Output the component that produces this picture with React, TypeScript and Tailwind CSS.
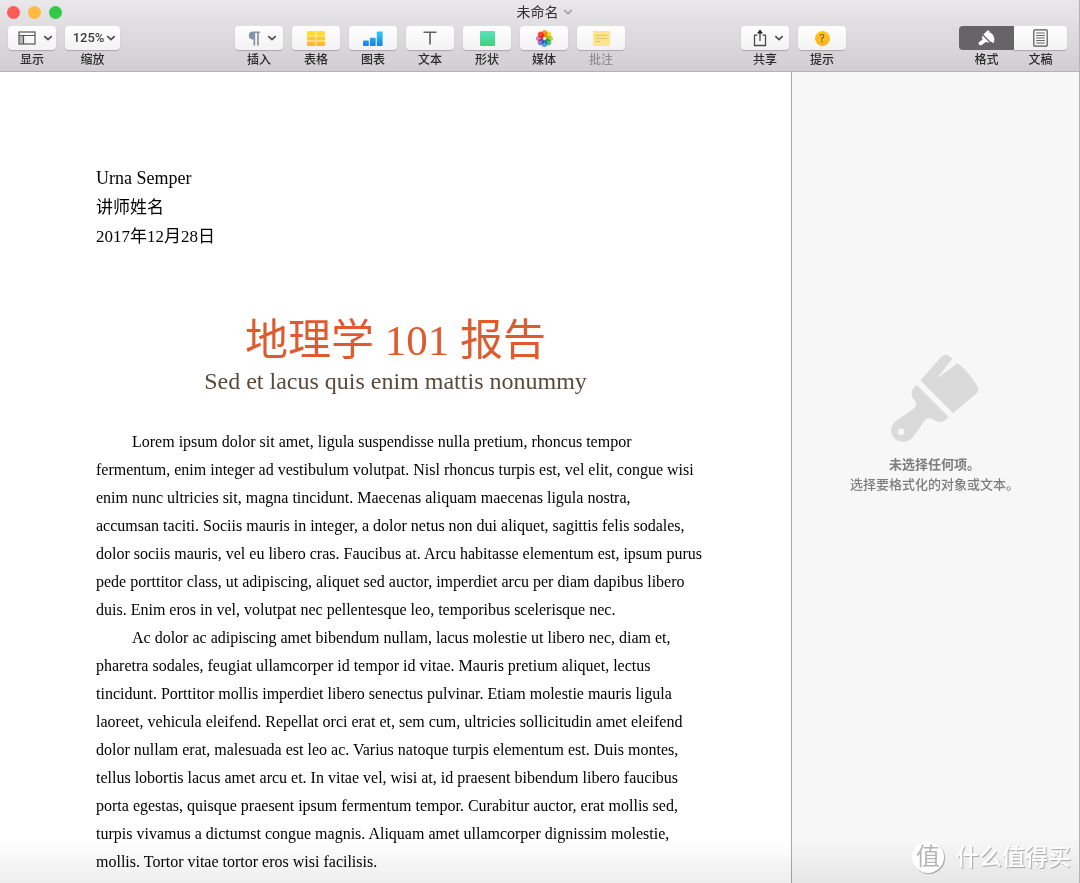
import type { ReactNode } from "react"

const LINES_ONE = [
  "Lorem ipsum dolor sit amet, ligula suspendisse nulla pretium, rhoncus tempor",
  "fermentum, enim integer ad vestibulum volutpat. Nisl rhoncus turpis est, vel elit, congue wisi",
  "enim nunc ultricies sit, magna tincidunt. Maecenas aliquam maecenas ligula nostra,",
  "accumsan taciti. Sociis mauris in integer, a dolor netus non dui aliquet, sagittis felis sodales,",
  "dolor sociis mauris, vel eu libero cras. Faucibus at. Arcu habitasse elementum est, ipsum purus",
  "pede porttitor class, ut adipiscing, aliquet sed auctor, imperdiet arcu per diam dapibus libero",
  "duis. Enim eros in vel, volutpat nec pellentesque leo, temporibus scelerisque nec.",
]

const LINES_TWO = [
  "Ac dolor ac adipiscing amet bibendum nullam, lacus molestie ut libero nec, diam et,",
  "pharetra sodales, feugiat ullamcorper id tempor id vitae. Mauris pretium aliquet, lectus",
  "tincidunt. Porttitor mollis imperdiet libero senectus pulvinar. Etiam molestie mauris ligula",
  "laoreet, vehicula eleifend. Repellat orci erat et, sem cum, ultricies sollicitudin amet eleifend",
  "dolor nullam erat, malesuada est leo ac. Varius natoque turpis elementum est. Duis montes,",
  "tellus lobortis lacus amet arcu et. In vitae vel, wisi at, id praesent bibendum libero faucibus",
  "porta egestas, quisque praesent ipsum fermentum tempor. Curabitur auctor, erat mollis sed,",
  "turpis vivamus a dictumst congue magnis. Aliquam amet ullamcorper dignissim molestie,",
  "mollis. Tortor vitae tortor eros wisi facilisis.",
]

const LINES_THREE = ["Consectetuer arcu ipsum ornare pellentesque vehicula, in vehicula"]

const PETALS = [
  { angle: 0, color: "#fb9a2c" },
  { angle: 45, color: "#f5dc38" },
  { angle: 90, color: "#b4dc50" },
  { angle: 135, color: "#55c08c" },
  { angle: 180, color: "#50aaf0" },
  { angle: 225, color: "#9480d4" },
  { angle: 270, color: "#e67cb4" },
  { angle: 315, color: "#fa5040" },
]

function Chevron({ className = "text-[#4a4a4a]" }: { className?: string }) {
  return (
    <svg viewBox="0 0 10 6" className={`h-[6px] w-[10px] shrink-0 ${className}`} fill="none">
      <path d="M1.3 1.2 5 4.7 8.7 1.2" stroke="currentColor" strokeWidth="1.6" />
    </svg>
  )
}

function ViewIcon() {
  return (
    <svg width="18" height="14" viewBox="0 0 18 14" fill="none" stroke="#555" strokeWidth="1.2">
      <path d="M1.4 4.5h4v8h-4z" fill="#b9b9b9" stroke="none" />
      <rect x="1" y="1" width="16" height="12" />
      <path d="M1 4.5h16M5.5 4.5V13" />
    </svg>
  )
}

function ParagraphIcon() {
  return (
    <svg width="12" height="15" viewBox="0 0 12 15" fill="#8494a8">
      <path d="M4.8 0.5H12V2H10.8V14.5H9.1V2H7.2V14.5H5.5V8.4H4.8A3.95 3.95 0 0 1 4.8 0.5Z" />
    </svg>
  )
}

function TableIcon() {
  return (
    <svg width="18" height="15" viewBox="0 0 18 15">
      <defs>
        <linearGradient id="table" x2="0" y2="1">
          <stop stopColor="#ffe22b" />
          <stop offset="1" stopColor="#ffb32c" />
        </linearGradient>
      </defs>
      <rect width="18" height="15" rx="1" fill="url(#table)" />
      <path d="M0 4.9h18M0 9.9h18M9 0v15" stroke="#fff3c4" strokeWidth="0.9" />
    </svg>
  )
}

function ChartIcon() {
  return (
    <svg width="20" height="15" viewBox="0 0 20 15">
      <defs>
        <linearGradient id="chart" x1="0" x2="0" y1="0" y2="15" gradientUnits="userSpaceOnUse">
          <stop stopColor="#32cdf5" />
          <stop offset="1" stopColor="#1a7df0" />
        </linearGradient>
      </defs>
      <g fill="url(#chart)">
        <rect x="0" y="9.5" width="5.8" height="5.5" rx="0.8" />
        <rect x="6.9" y="6.8" width="5.8" height="8.2" rx="0.8" />
        <rect x="13.8" y="0.4" width="5.8" height="14.6" rx="0.8" />
      </g>
    </svg>
  )
}

function TextIcon() {
  return (
    <svg width="14" height="14" viewBox="0 0 14 14" fill="none" stroke="#606060" strokeWidth="1.6">
      <path d="M0.5 1.2h13M7 1.2V13.5" />
    </svg>
  )
}

function ShapeIcon() {
  return <span className="size-[15px] rounded-[1px] bg-linear-to-b from-[#56e2bd] to-[#3fd27a]" />
}

function MediaIcon() {
  return (
    <svg width="17" height="17" viewBox="-8.5 -8.5 17 17">
      {PETALS.map((p) => (
        <ellipse
          key={p.angle}
          cx="0"
          cy="-4.9"
          rx="2.8"
          ry="3.6"
          fill={p.color}
          transform={`rotate(${p.angle})`}
          className="mix-blend-multiply"
        />
      ))}
    </svg>
  )
}

function CommentIcon() {
  return (
    <svg width="17" height="15" viewBox="0 0 17 15">
      <rect width="17" height="15" rx="0.8" fill="#fde58b" />
      <path d="M2.5 4.3h12M2.5 7.4h12M2.5 10.5h4.5" stroke="#d5bb69" strokeWidth="0.9" />
    </svg>
  )
}

function ShareIcon() {
  return (
    <svg width="14" height="18" viewBox="0 0 14 18" fill="none" stroke="#4a4a4a" strokeWidth="1.3">
      <path d="M4.5 6.2H1.5v10.3h11V6.2h-3M7 12V2" />
      <path d="M4 4.4 7 0.4l3 4z" fill="#1c1c1c" stroke="none" />
    </svg>
  )
}

function TipIcon() {
  return (
    <span className="flex size-[15px] items-center justify-center rounded-full bg-linear-to-b from-[#ffc91f] to-[#fdb022] text-[11px] leading-none text-[#6d4a0c]">
      ?
    </span>
  )
}

function DocumentIcon() {
  return (
    <svg width="15" height="18" viewBox="0 0 15 18" fill="none" stroke="#555">
      <rect x="0.8" y="0.8" width="13.4" height="16.4" rx="1" strokeWidth="1.2" />
      <path d="M3.2 4h8.6M3.2 6.5h8.6M3.2 9h8.6M3.2 11.5h8.6M3.2 14h8.6" strokeWidth="0.9" />
    </svg>
  )
}

function FormatIcon() {
  return (
    <svg width="17" height="16" viewBox="0 0 17 16" fill="#fff">
      <path d="M5.4 4.6 9.4 0.6Q10.2 0 11 0.8L11.6 1.5 10.6 2.8 12 2.2Q16.200 4.8 16.4 9.5 16.3 12.500 15 13.3 14.200 12.7 14 11.600L12.900 12.300 12.400 11.400Z" />
      <path d="M4.7 5.8 11.2 12.2Q10.4 13 9.1 12.200 7.900 11.600 7 12.400L3.800 15C2 16.200 -.2 14.200 .7 12.500 1.200 11.400 2.600 11 4 9.900 5 9 4.500 8.700 4.100 8.100 3.500 7.200 3.900 6.400 4.700 5.800Z" />
    </svg>
  )
}

function BrushIcon() {
  return (
    <svg width="88" height="88" viewBox="0 0 88 88" fill="currentColor">
      <path d="M29.5 26.5 50 3Q53.5-.5 57 1.2L61.5 4.5 46 24.5 66.5 9Q80 20 87 33.500 88 36.500 86 39L62 59Z" />
      <path
        fillRule="evenodd"
        d="M25.5 31 57.5 63C54 67.500 49 69.500 44 66.500 39.500 63.500 36 63 33 67.500L22 83C17 89.500 7.500 89 3 84-2 78.500 0 70.500 5.500 66.500L21.500 55.500C26.500 52 25.500 49 22.500 45 19 40.500 20.500 35 25.500 31ZM10 74.500a3.300 3.300 0 1 0 .01 6.600 3.300 3.300 0 1 0-.01-6.600Z"
      />
    </svg>
  )
}

type ToolProps = {
  label: string
  children: ReactNode
  menu?: boolean
  disabled?: boolean
}

function Tool({ label, children, menu, disabled }: ToolProps) {
  return (
    <button type="button" disabled={disabled} className="flex flex-col items-center gap-0.5">
      <span
        className={`flex h-6 w-12 items-center justify-center rounded bg-linear-to-b from-white to-[#f3f3f3] shadow-[0_1px_1px_rgba(0,0,0,0.22)] ${menu ? "gap-[7px] pl-1.5" : ""}`}
      >
        {children}
        {menu && <Chevron />}
      </span>
      <span
        className={`text-xs leading-4 font-medium ${disabled ? "text-[#8f8e90]" : "text-[#2c2c2c]"}`}
      >
        {label}
      </span>
    </button>
  )
}

function Toolbar() {
  return (
    <header className="flex h-18 shrink-0 flex-col gap-0.5 border-b border-[#b3b1b3] bg-linear-to-b from-[#e9e7e9] to-[#d0ced0]">
      <div className="grid h-6 grid-cols-3 items-center px-[7px]">
        <div className="flex items-center gap-2">
          <button type="button" aria-label="关闭" className="size-[13px] rounded-full bg-[#fc5b57]" />
          <button type="button" aria-label="最小化" className="size-[13px] rounded-full bg-[#fdbc40]" />
          <button type="button" aria-label="缩放窗口" className="size-[13px] rounded-full bg-[#34c84a]" />
        </div>
        <h1 className="flex items-center justify-center gap-1 pl-2.5 text-sm leading-6 text-[#333]">
          未命名
          <Chevron className="text-[#a3a1a3]" />
        </h1>
      </div>
      <div className="flex justify-between pr-3 pl-2">
        <div className="flex flex-1 gap-[9px]">
          <Tool label="显示" menu><ViewIcon /></Tool>
          <button type="button" className="flex flex-col items-center gap-0.5">
            <span className="flex h-6 w-[55px] items-center justify-center gap-0.5 rounded bg-linear-to-b from-white to-[#f3f3f3] pl-1 font-['Roboto',sans-serif] text-[13px] font-medium text-[#3c3c3c] shadow-[0_1px_1px_rgba(0,0,0,0.22)]">
              125%
              <Chevron />
            </span>
            <span className="text-xs leading-4 font-medium text-[#2c2c2c]">缩放</span>
          </button>
        </div>
        <div className="ml-1.5 flex gap-[9px]">
          <Tool label="插入" menu><ParagraphIcon /></Tool>
          <Tool label="表格"><TableIcon /></Tool>
          <Tool label="图表"><ChartIcon /></Tool>
          <Tool label="文本"><TextIcon /></Tool>
          <Tool label="形状"><ShapeIcon /></Tool>
          <Tool label="媒体"><MediaIcon /></Tool>
          <Tool label="批注" disabled><CommentIcon /></Tool>
        </div>
        <div className="flex flex-2 justify-end gap-[9px]">
          <Tool label="共享" menu><ShareIcon /></Tool>
          <Tool label="提示"><TipIcon /></Tool>
          <div className="ml-26 flex">
            <button type="button" aria-pressed="true" className="flex flex-col items-center gap-0.5">
              <span className="flex h-6 w-[55px] items-center justify-center rounded-l bg-[#666466]">
                <FormatIcon />
              </span>
              <span className="text-xs leading-4 font-medium text-[#2c2c2c]">格式</span>
            </button>
            <button type="button" className="flex flex-col items-center gap-0.5">
              <span className="flex h-6 w-[53px] items-center justify-center rounded-r bg-linear-to-b from-white to-[#f3f3f3] shadow-[0_1px_1px_rgba(0,0,0,0.22)]">
                <DocumentIcon />
              </span>
              <span className="text-xs leading-4 font-medium text-[#2c2c2c]">文稿</span>
            </button>
          </div>
        </div>
      </div>
    </header>
  )
}

function Paragraph({ lines }: { lines: string[] }) {
  return (
    <p className="indent-9">
      {lines.map((line) => (
        <span key={line}>
          {line}
          <br />
        </span>
      ))}
    </p>
  )
}

function Page() {
  return (
    <main className="min-w-0 flex-1 overflow-hidden bg-white px-24 pt-23 font-['Liberation_Serif','Noto_Sans_CJK_SC',serif] whitespace-nowrap text-black">
      <div className="text-[17px] leading-[29px]">
        <p className="text-lg leading-[29px]">Urna Semper</p>
        <p>讲师姓名</p>
        <p>2017年12月28日</p>
      </div>
      <h2 className="mt-16 text-center text-[43px] leading-[52px] text-[#de5b2f]">
        地理学 101 报告
      </h2>
      <p className="text-center text-2xl leading-7 text-[#594a3a]">Sed et lacus quis enim mattis nonummy</p>
      <div className="mt-[33px] text-base leading-7">
        <Paragraph lines={LINES_ONE} />
        <Paragraph lines={LINES_TWO} />
        <Paragraph lines={LINES_THREE} />
      </div>
    </main>
  )
}

function Inspector() {
  return (
    <aside className="flex w-72 shrink-0 flex-col items-center border-l border-[#aaa] bg-[#f7f7f7] pt-[282px] pr-0.5 text-[13px] leading-5 text-[#7d7d7d]">
      <span className="text-[#dadada]">
        <BrushIcon />
      </span>
      <p className="mt-3 font-bold">未选择任何项。</p>
      <p className="font-medium">选择要格式化的对象或文本。</p>
    </aside>
  )
}

export default function App() {
  return (
    <div className="relative flex h-screen flex-col overflow-hidden border-r border-[#b4b4b4] font-['Inter','Noto_Sans_CJK_SC',sans-serif]">
      <Toolbar />
      <div className="flex min-h-0 flex-1">
        <Page />
        <Inspector />
      </div>
      <div className="pointer-events-none absolute inset-x-0 bottom-0 h-11 bg-linear-to-b from-transparent to-black/7" />
      <div className="absolute right-2 bottom-2 flex items-center gap-3 text-white">
        <span className="flex size-8 items-center justify-center rounded-full bg-white text-2xl leading-8 text-[#b5b5b5] shadow-[1px_1px_1px_rgba(0,0,0,0.3)]">
          值
        </span>
        <span className="text-[23px] leading-9 font-medium [text-shadow:1px_1px_1px_rgba(0,0,0,0.3)]">什么值得买</span>
      </div>
    </div>
  )
}
